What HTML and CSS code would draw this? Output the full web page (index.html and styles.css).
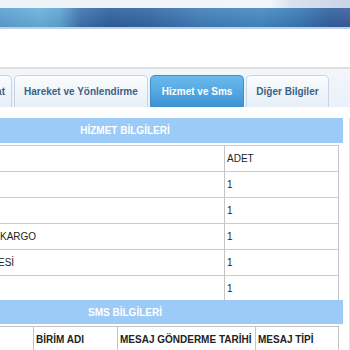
FILE: index.html
```html
<!DOCTYPE html>
<html>
<head>
<meta charset="utf-8">
<link rel="stylesheet" href="styles.css">
</head>
<body>
<div class="page">
  <div class="banner">
    <div class="banner-top"></div>
    <div class="banner-bar"></div>
    <div class="banner-edge"></div>
  </div>
  <div class="spacer"></div>
  <div class="tabstrip">
    <div class="tabs">
      <div class="tab tab-cut">Genel Bilgi Sevkiyat</div>
      <div class="tab">Hareket ve Yönlendirme</div>
      <div class="tab active">Hizmet ve Sms</div>
      <div class="tab">Diğer Bilgiler</div>
    </div>
  </div>
  <div class="panel">
    <div class="bar">HİZMET BİLGİLERİ</div>
    <div class="grid">
      <div class="row head"><div class="c1"></div><div class="c2">ADET</div></div>
      <div class="row"><div class="c1"></div><div class="c2">1</div></div>
      <div class="row"><div class="c1"></div><div class="c2">1</div></div>
      <div class="row"><div class="c1">KARGO</div><div class="c2">1</div></div>
      <div class="row"><div class="c1 cut">ESİ</div><div class="c2">1</div></div>
      <div class="row last"><div class="c1"></div><div class="c2">1</div></div>
    </div>
    <div class="bar sms">SMS BİLGİLERİ</div>
    <div class="smsrow">
      <div class="s0"></div>
      <div class="s1">BİRİM ADI</div>
      <div class="s2">MESAJ GÖNDERME TARİHİ</div>
      <div class="s3">MESAJ TİPİ</div>
    </div>
  </div>
</div>
</body>
</html>
```
FILE: styles.css
```css
html, body {
  margin: 0;
  padding: 0;
  background: #ffffff;
}
body {
  width: 350px;
  height: 350px;
  overflow: hidden;
  font-family: "Liberation Sans", Arial, sans-serif;
}
.page {
  width: 350px;
}
.banner-top {
  height: 8px;
  background: linear-gradient(to right, #eef3f8 0, #f2f5f9 270px, #d9e3ee 290px, #c8d5e5 350px);
}
.banner-bar {
  height: 19px;
  background:
    linear-gradient(to bottom, rgba(255,255,255,0.10), rgba(0,0,0,0.06)),
    linear-gradient(to right, #5b9fd3 0, #68afdc 40px, #5ea3d4 60px, #3e73ae 80px, #2f5f9e 110px, #3466a5 150px, #3f7db8 200px, #4288c2 260px, #3877b4 300px, #30609e 330px, #3a5d9e 350px);
}
.banner-edge {
  height: 2px;
  background: #c3d0e2;
}
.spacer {
  height: 38px;
}
.tabstrip {
  height: 38px;
  border-top: 2px solid #dedede;
  background: linear-gradient(to bottom, #f3f6fa, #eaf1f8);
  display: flex;
  align-items: flex-end;
  overflow: hidden;
}
.tabs {
  display: flex;
  gap: 2px;
  align-items: flex-end;
}
.tab {
  height: 32px;
  box-sizing: border-box;
  padding: 0 9px;
  display: flex;
  align-items: center;
  font-size: 10px;
  font-weight: bold;
  color: #3d6188;
  background: linear-gradient(to bottom, #fbfdfe, #e6eef7);
  border: 1px solid #c7d6e6;
  border-bottom: none;
  border-radius: 5px 5px 0 0;
  white-space: nowrap;
}
.tab-cut {
  width: 110px;
  margin-left: -98px;
  justify-content: flex-end;
  padding: 0 6px 0 0;
  overflow: hidden;
}
.tab.active {
  padding: 0 11px;
  color: #ffffff;
  background: linear-gradient(to bottom, #6cbaeb, #4fa4df 60%, #3b8fd1);
  border-color: #3f8fd0;
}
.panel {
  margin-top: 11px;
  width: 350px;
  border-right: 1px solid #e2e2e2;
  box-sizing: border-box;
  padding-right: 4px;
}
.bar {
  width: 343px;
  height: 25px;
  box-sizing: border-box;
  padding-right: 93px;
  background: #9ccbf7;
  color: #ffffff;
  font-size: 10px;
  font-weight: bold;
  display: flex;
  align-items: center;
  justify-content: center;
}
.grid {
  width: 339px;
  margin-top: 2px;
  border-right: 1px solid #c4c4c4;
  box-sizing: border-box;
}
.row {
  display: flex;
  height: 26px;
  border-top: 1px solid #cccccc;
  box-sizing: border-box;
  font-size: 10px;
  color: #222222;
}
.row.last {
  height: 25px;
}
.c1 {
  width: 224px;
  display: flex;
  align-items: center;
  white-space: nowrap;
  overflow: hidden;
}
.c1.cut {
  text-indent: -2px;
}
.c2 {
  flex: 1;
  border-left: 1px solid #c4c4c4;
  display: flex;
  align-items: center;
  padding-left: 2px;
}
.bar.sms {
  height: 24px;
}
.smsrow {
  display: flex;
  width: 339px;
  height: 26px;
  margin-top: 2px;
  border-top: 1px solid #c4c4c4;
  border-right: 1px solid #c4c4c4;
  box-sizing: border-box;
  font-size: 10px;
  font-weight: bold;
  color: #222222;
}
.smsrow div {
  display: flex;
  align-items: center;
  padding-left: 2px;
  white-space: nowrap;
  box-sizing: border-box;
}
.s0 { width: 33px; }
.s1 { width: 84px; border-left: 1px solid #c4c4c4; }
.s2 { width: 138px; border-left: 1px solid #c4c4c4; }
.s3 { flex: 1; border-left: 1px solid #c4c4c4; }
```
